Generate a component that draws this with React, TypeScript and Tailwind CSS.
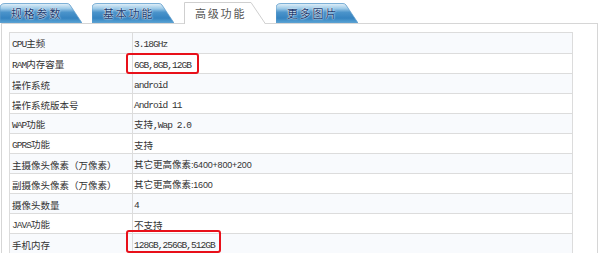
import React from 'react'

const rows = [
  { label: 'CPU主频', value: '3.18GHz' },
  { label: 'RAM内存容量', value: '6GB,8GB,12GB', box: 'ram' },
  { label: '操作系统', value: 'android' },
  { label: '操作系统版本号', value: 'Android 11' },
  { label: 'WAP功能', value: '支持,Wap 2.0' },
  { label: 'GPRS功能', value: '支持' },
  { label: '主摄像头像素（万像素）', value: '其它更高像素:6400+800+200', sans: true },
  { label: '副摄像头像素（万像素）', value: '其它更高像素:1600', sans: true },
  { label: '摄像头数量', value: '4' },
  { label: 'JAVA功能', value: '不支持' },
  { label: '手机内存', value: '128GB,256GB,512GB', box: 'rom' },
]

const tabs = [
  { name: '规格参数', active: false },
  { name: '基本功能', active: false },
  { name: '高级功能', active: true },
  { name: '更多图片', active: false },
]

// split latin runs from CJK runs so each gets its own face
function Mixed({ text, sans }: { text: string; sans?: boolean }) {
  const parts = text.split(/([\u0020-\u00ff]+)/).filter(Boolean)
  return (
    <span className="leading-[20px] whitespace-pre">
      {parts.map((p, i) =>
        /^[\u0020-\u00ff]+$/.test(p) ? (
          sans ? (
            <span key={i} className="font-['Liberation_Sans'] text-[9px] tracking-[-0.2px]">{p}</span>
          ) : (
            <span key={i} className="font-['Liberation_Mono'] text-[9.5px] tracking-[-0.95px]">{p}</span>
          )
        ) : (
          <span key={i} className="font-['Noto_Sans_CJK_SC'] text-[9.5px]">{p}</span>
        )
      )}
    </span>
  )
}

function Tab({ name, active }: { name: string; active: boolean }) {
  return (
    <div className={active ? 'relative w-[82px] h-[22px] -mb-[1px] z-10' : 'relative w-[82px] h-[20px]'}>
      {active ? (
        <svg className="absolute inset-0" width="82" height="22" viewBox="0 0 82 22">
          <path d="M0.5,22 L0.5,0.5 L67,0.5 L81.5,22" fill="#fff" stroke="#cfcfcf" />
        </svg>
      ) : (
        <svg className="absolute inset-0" width="82" height="20" viewBox="0 0 82 20">
          <defs>
            <linearGradient id={'g' + name} x1="0" y1="0" x2="0" y2="1">
              <stop offset="0" stopColor="#e4f1f9" />
              <stop offset="0.25" stopColor="#9fcbe8" />
              <stop offset="0.45" stopColor="#4b94cb" />
              <stop offset="0.75" stopColor="#3583c0" />
              <stop offset="1" stopColor="#5aa5d6" />
            </linearGradient>
          </defs>
          <path d="M0,20 L0,5 Q0,0.5 5,0.5 L67,0.5 Q69,0.5 70,2 L82,20 Z" fill={'url(#g' + name + ')'} stroke="#5f9dcb" strokeWidth="0.8" />
        </svg>
      )}
      <span
        className={
          active
            ? "relative flex h-full items-center pl-[11px] font-['Noto_Sans_CJK_SC'] text-[11px] tracking-[1.8px] text-[#555]"
            : "relative flex h-full items-center pl-[11px] font-['Noto_Sans_CJK_SC'] text-[11px] tracking-[1.8px] text-[#1a3a6e] [text-shadow:0_0_2px_#fff,0_0_1px_#fff]"
        }
      >
        {name}
      </span>
    </div>
  )
}

export default function App() {
  return (
    <div className="w-[600px] h-[253px] bg-white overflow-hidden">
      {/* tab strip */}
      <div className="flex items-end gap-[10px] h-[23px]">
        {tabs.map((t) => (
          <Tab key={t.name} name={t.name} active={t.active} />
        ))}
      </div>

      {/* panel */}
      <div className="ml-[1px] w-[597px] h-[240px] border border-b-0 border-[#d6d6d6] pt-[8px] pl-[7px]">
        <div className="w-[564px] border border-[#dcdcdc] text-[#333]">
          {rows.map((r, i) => (
            <div
              key={r.label}
              className={
                i % 2 === 0
                  ? 'flex h-[20px] bg-[#f8fafd] border-t border-[#dcdcdc] first:border-t-0'
                  : 'flex h-[20px] bg-white border-t border-[#dcdcdc]'
              }
            >
              <div className="w-[123px] flex items-center pl-[2px] border-r border-[#dcdcdc] whitespace-nowrap">
                <Mixed text={r.label} />
              </div>
              <div className="relative flex-1 flex items-center pl-[1px] whitespace-nowrap">
                <Mixed text={r.value} sans={r.sans} />
                {r.box === 'ram' && (
                  <div className="absolute left-[-7px] top-[-1px] w-[73px] h-[21px] border-2 border-[#e8101a] rounded-[3px]" />
                )}
                {r.box === 'rom' && (
                  <div className="absolute left-[-7px] top-[-4px] w-[95px] h-[23px] border-2 border-[#e8101a] rounded-[3px]" />
                )}
              </div>
            </div>
          ))}
        </div>
      </div>
    </div>
  )
}
